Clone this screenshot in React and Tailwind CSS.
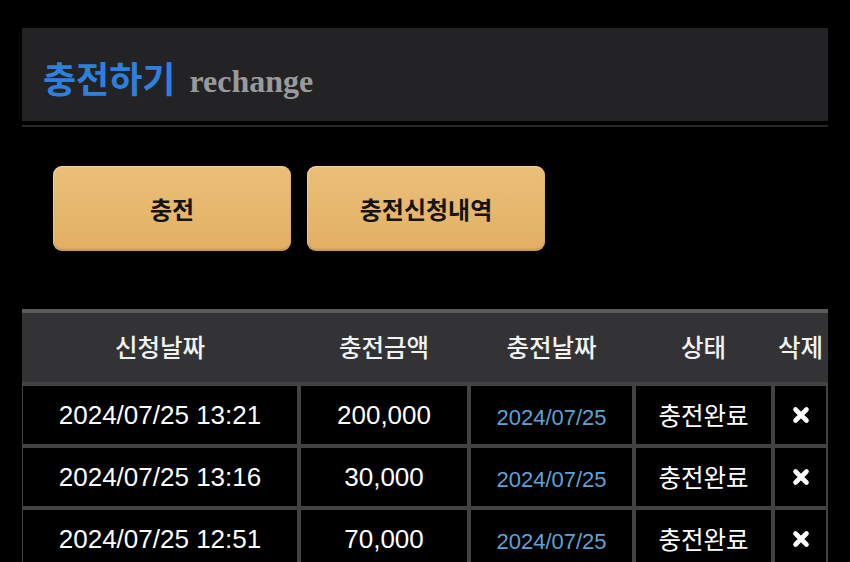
import React from 'react';

const rows = [
    { applied: '2024/07/25 13:21', amount: '200,000', charged: '2024/07/25', status: '충전완료' },
    { applied: '2024/07/25 13:16', amount: '30,000', charged: '2024/07/25', status: '충전완료' },
    { applied: '2024/07/25 12:51', amount: '70,000', charged: '2024/07/25', status: '충전완료' },
];

const kr = { fontFamily: '"Noto Sans CJK KR", "Noto Sans", sans-serif' };
const latin = { fontFamily: '"Liberation Sans", Arial, sans-serif' };

const cols = 'grid grid-cols-[274px_166px_161px_135px_51px] gap-x-[4px]';

const DeleteIcon = () => (
    <svg width="20" height="20" viewBox="0 0 20 20">
        <path d="M4.5 4.5 L15.5 15.5 M15.5 4.5 L4.5 15.5" stroke="white" strokeWidth="4.6" strokeLinecap="round" />
    </svg>
);

const App = () => {
    return (
        <div className="min-h-screen bg-black pt-[28px] px-[22px]">
            {/* Title bar */}
            <div className="h-[93px] bg-[#232325] flex items-center pl-[21px] pt-[4px]">
                <h1 className="text-[36px] font-bold text-[#2f80de] leading-none" style={kr}>충전하기</h1>
                <span className="ml-[14px] mt-[8px] text-[32px] font-bold text-[#9a9a9a] leading-none" style={{ fontFamily: '"Liberation Serif", "Times New Roman", serif' }}>
                    rechange
                </span>
            </div>
            <div className="mt-[4px] h-[2px] bg-[#28282c]" />

            {/* Buttons */}
            <div className="mt-[39px] ml-[31px] flex gap-[16px]">
                {['충전', '충전신청내역'].map((label) => (
                    <button
                        key={label}
                        className="w-[238px] h-[85px] rounded-[9px] bg-gradient-to-b from-[#ebbf78] to-[#e2b064] text-[#141414] text-[24px] font-bold shadow-[inset_1px_1px_1px_rgba(255,255,255,0.35),inset_0_-2px_2px_rgba(120,80,20,0.25),0_2px_3px_rgba(0,0,0,0.6)]"
                        style={kr}
                    >
                        {label}
                    </button>
                ))}
            </div>

            {/* History table */}
            <div className="mt-[58px] bg-[#434343] pl-px pr-[2px]">
                <div className={`${cols} -ml-px -mr-[2px] pl-px pr-[2px] h-[73px] bg-[#333335] border-t-4 border-[#5b5b5b] items-center text-[24.5px] font-medium text-[#f2f2f2]`} style={kr}>
                    <div className="text-center">신청날짜</div>
                    <div className="text-center">충전금액</div>
                    <div className="text-center">충전날짜</div>
                    <div className="text-center">상태</div>
                    <div className="text-center whitespace-nowrap">삭제</div>
                </div>
                <div className={`${cols} gap-y-[4px] pt-[4px]`}>
                    {rows.map((r, i) => (
                        <React.Fragment key={i}>
                            <div className="h-[58px] bg-black flex items-center justify-center text-white text-[26px]" style={latin}>{r.applied}</div>
                            <div className="h-[58px] bg-black flex items-center justify-center text-white text-[26px]" style={latin}>{r.amount}</div>
                            <div className="h-[58px] bg-black flex items-center justify-center text-[#5ea2d6] text-[22px] pt-[4px]" style={latin}>{r.charged}</div>
                            <div className="h-[58px] bg-black flex items-center justify-center text-white text-[24.5px]" style={kr}>{r.status}</div>
                            <div className="h-[58px] bg-black flex items-center justify-center">
                                <DeleteIcon />
                            </div>
                        </React.Fragment>
                    ))}
                </div>
            </div>
        </div>
    );
};

export default App;
